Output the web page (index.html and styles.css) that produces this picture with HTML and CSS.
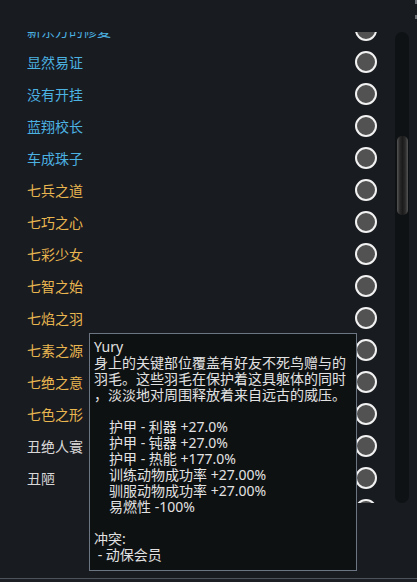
FILE: index.html
```html
<!DOCTYPE html>
<html lang="zh">
<head>
    <meta charset="UTF-8">
    <meta name="viewport" content="width=device-width, initial-scale=1.0">
    <title>特性</title>
    <link rel="stylesheet" href="styles.css">
</head>
<body>
    <div class="frame">
        <div class="list">
            <div class="rows">
                <div class="row blue"><span>新东方的修复</span><i class="dot"></i></div>
                <div class="row blue"><span>显然易证</span><i class="dot"></i></div>
                <div class="row blue"><span>没有开挂</span><i class="dot"></i></div>
                <div class="row blue"><span>蓝翔校长</span><i class="dot"></i></div>
                <div class="row blue"><span>车成珠子</span><i class="dot"></i></div>
                <div class="row gold"><span>七兵之道</span><i class="dot"></i></div>
                <div class="row gold"><span>七巧之心</span><i class="dot"></i></div>
                <div class="row gold"><span>七彩少女</span><i class="dot"></i></div>
                <div class="row gold"><span>七智之始</span><i class="dot"></i></div>
                <div class="row gold"><span>七焰之羽</span><i class="dot"></i></div>
                <div class="row gold"><span>七素之源</span><i class="dot"></i></div>
                <div class="row gold"><span>七绝之意</span><i class="dot"></i></div>
                <div class="row gold"><span>七色之形</span><i class="dot"></i></div>
                <div class="row plain"><span>丑绝人寰</span><i class="dot"></i></div>
                <div class="row plain"><span>丑陋</span><i class="dot"></i></div>
                <div class="row plain"><span>乐天派的人</span><i class="dot"></i></div>
            </div>
        </div>
        <div class="track">
            <div class="thumb"></div>
        </div>
    </div>
    <div class="bottom"></div>
    <div class="edge-mark"></div>

    <div class="tooltip">
        <p>Yury</p>
        <p>身上的关键部位覆盖有好友不死鸟赠与的</p>
        <p>羽毛。这些羽毛在保护着这具躯体的同时</p>
        <p>，淡淡地对周围释放着来自远古的威压。</p>
        <p>&nbsp;</p>
        <p class="stat">护甲 - 利器 +27.0%</p>
        <p class="stat">护甲 - 钝器 +27.0%</p>
        <p class="stat">护甲 - 热能 +177.0%</p>
        <p class="stat">训练动物成功率 +27.00%</p>
        <p class="stat">驯服动物成功率 +27.00%</p>
        <p class="stat">易燃性 -100%</p>
        <p>&nbsp;</p>
        <p>冲突:</p>
        <p> - 动保会员</p>
    </div>
</body>
</html>
```

FILE: styles.css
```css
body {
    margin: 0;
    background-color: #181b20;
    font-family: "Noto Sans", "Noto Sans CJK SC", sans-serif;
    width: 417px;
    height: 582px;
    overflow: hidden;
    position: relative;
}
.frame {
    display: flex;
    height: 578px;
}
.list {
    width: 385px;
    height: 471px;
    margin-top: 32px;
    overflow: hidden;
}
.rows {
    margin-top: -18px;
}
.row {
    height: 32px;
    display: flex;
    align-items: center;
    justify-content: space-between;
    padding-left: 27px;
    padding-right: 8px;
    font-size: 14px;
}
.blue {
    color: #4cb2e2;
}
.gold {
    color: #e9b650;
}
.plain {
    color: #d8d8d8;
}
.dot {
    width: 18px;
    height: 18px;
    border: 2px solid #f2f2f2;
    border-radius: 50%;
    background: #525252;
}
.track {
    width: 14px;
    height: 471px;
    margin-top: 32px;
    margin-left: 10px;
    border-radius: 7px;
    background: #0f1215;
}
.thumb {
    width: 11px;
    height: 79px;
    margin-top: 104px;
    margin-left: 2px;
    border-radius: 5px;
    background: linear-gradient(to right, #555555, #2a2a2a 25%, #1b1b1b 50%, #2a2a2a 75%, #555555);
}
.bottom {
    height: 4px;
    border-top: 1px solid #4e545c;
    background: #1c1f24;
    box-sizing: border-box;
}
.edge-mark {
    position: absolute;
    top: 0;
    right: 0;
    width: 2px;
    height: 4px;
    background: #6a6f76;
    box-shadow: 0 15px 0 0 #6a6f76;
}
.tooltip {
    position: absolute;
    left: 89px;
    top: 333px;
    width: 262px;
    height: 225px;
    padding: 5px 0 6px 4px;
    border: 1px solid #6c7682;
    background: #0e1112;
    color: #e2e2e2;
    font-size: 14px;
    line-height: 16px;
}
.tooltip p {
    margin: 0;
    white-space: pre;
}
.tooltip .stat {
    padding-left: 15px;
}
```
